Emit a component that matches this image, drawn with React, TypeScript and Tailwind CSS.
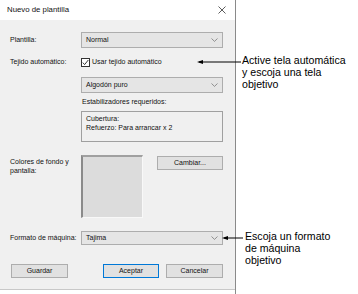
import React from "react";

const ui = { fontFamily: '"Liberation Sans", Arial, sans-serif' };

/* ── small drop-down chevron ─── */
function Chevron() {
  return (
    <svg width="7" height="4" viewBox="0 0 7 4" fill="none" stroke="#7a7a7a" strokeWidth="0.8">
      <polyline points="0.5,0.5 3.5,3.4 6.5,0.5" />
    </svg>
  );
}

function Select({ value, height = "h-[16px]" }: { value: string; height?: string }) {
  return (
    <div
      className={`flex items-center justify-between w-[142px] ${height} border border-[#adadad] bg-[#e5e5e5] pl-[4px] pr-[4px] text-[7px] text-[#111]`}
    >
      <span>{value}</span>
      <Chevron />
    </div>
  );
}

function Btn({ label, primary, className }: { label: string; primary?: boolean; className?: string }) {
  return (
    <div
      className={`flex items-center justify-center h-[14px] bg-[#e1e1e1] border text-[7px] text-[#111] ${
        primary ? "border-[#0078d7]" : "border-[#adadad]"
      } ${className ?? ""}`}
    >
      {label}
    </div>
  );
}

/* ── left-pointing callout arrow ─── */
function Arrow({ x1, x2, y }: { x1: number; x2: number; y: number }) {
  return (
    <svg className="absolute left-0 top-0 pointer-events-none" width="358" height="294">
      <line x1={x1 + 2} y1={y} x2={x2} y2={y} stroke="#000" strokeWidth="1" />
      <polygon points={`${x1},${y} ${x1 + 6},${y - 2} ${x1 + 6},${y + 2}`} fill="#000" />
    </svg>
  );
}

export default function App() {
  return (
    <div className="relative w-[358px] h-[294px] bg-white overflow-hidden" style={ui}>
      {/* Dialog */}
      <div className="w-[236px] h-[294px] border-r border-[#8a8a8a] flex flex-col">
        {/* Title bar */}
        <div className="h-[20px] bg-white flex items-center justify-between pl-[7px] pr-[9px]">
          <span className="text-[7.8px] text-[#111]">Nuevo de plantilla</span>
          <svg width="8" height="8" viewBox="0 0 8 8" stroke="#333" strokeWidth="0.8">
            <line x1="0.5" y1="0.5" x2="7.5" y2="7.5" />
            <line x1="7.5" y1="0.5" x2="0.5" y2="7.5" />
          </svg>
        </div>

        {/* Body */}
        <div className="bg-[#f0f0f0] flex flex-col pb-[11px] border-b border-[#c8c8c8] text-[7px] text-[#111]">
          <div className="flex items-center mt-[12px]">
            <div className="w-[81px] pl-[10px]">Plantilla:</div>
            <Select value="Normal" />
          </div>

          <div className="flex items-center mt-[9px] h-[10px]">
            <div className="w-[81px] pl-[10px]">Tejido automático:</div>
            <div className="flex items-center gap-[2px]">
              <div className="w-[9px] h-[9px] border border-[#333] bg-white flex items-center justify-center">
                <svg width="7" height="7" viewBox="0 0 7 7" fill="none" stroke="#222" strokeWidth="0.9">
                  <polyline points="0.8,3.6 2.6,5.6 6.3,1" />
                </svg>
              </div>
              <span>Usar tejido automático</span>
            </div>
          </div>

          <div className="flex mt-[10px] pl-[81px]">
            <Select value="Algodón puro" />
          </div>

          <div className="mt-[4px] pl-[82px] leading-[10px]">Estabilizadores requeridos:</div>

          <div className="mt-[4px] ml-[81px] w-[142px] h-[31px] border border-[#a0a0a0] bg-[#f0f0f0] px-[4px] pt-[2px] leading-[9px]">
            <div>Cubertura:</div>
            <div>Refuerzo: Para arrancar x 2</div>
          </div>

          <div className="flex mt-[13px]">
            <div className="w-[81px] pl-[10px] leading-[9px] pt-[2px]">
              Colores de fondo y
              <br />
              pantalla:
            </div>
            <div className="w-[62px] h-[63px] bg-[#dcdcdc] border-l-2 border-t-2 border-l-[#8a8a8a] border-t-[#a0a0a0] border-r border-b border-r-[#f8f8f8] border-b-[#f8f8f8]" />
            <Btn label="Cambiar..." className="ml-[14px] mt-[1px] w-[66px]" />
          </div>

          <div className="flex items-center mt-[13px]">
            <div className="w-[81px] pl-[10px]">Formato de máquina:</div>
            <Select value="Tajima" height="h-[14px]" />
          </div>

          <div className="flex mt-[19px]">
            <Btn label="Guardar" className="ml-[11px] w-[57px]" />
            <Btn label="Aceptar" primary className="ml-[35px] w-[56px]" />
            <Btn label="Cancelar" className="ml-[7px] w-[57px]" />
          </div>
        </div>
      </div>

      {/* Callouts */}
      <Arrow x1={197} x2={241} y={62} />
      <div className="absolute left-[242px] top-[54px] text-[10.6px] leading-[12px] text-black">
        Active tela automática
        <br />
        y escoja una tela
        <br />
        objetivo
      </div>

      <Arrow x1={222} x2={243} y={238} />
      <div className="absolute left-[245px] top-[230px] text-[10.6px] leading-[12px] text-black">
        Escoja un formato
        <br />
        de máquina
        <br />
        objetivo
      </div>
    </div>
  );
}
